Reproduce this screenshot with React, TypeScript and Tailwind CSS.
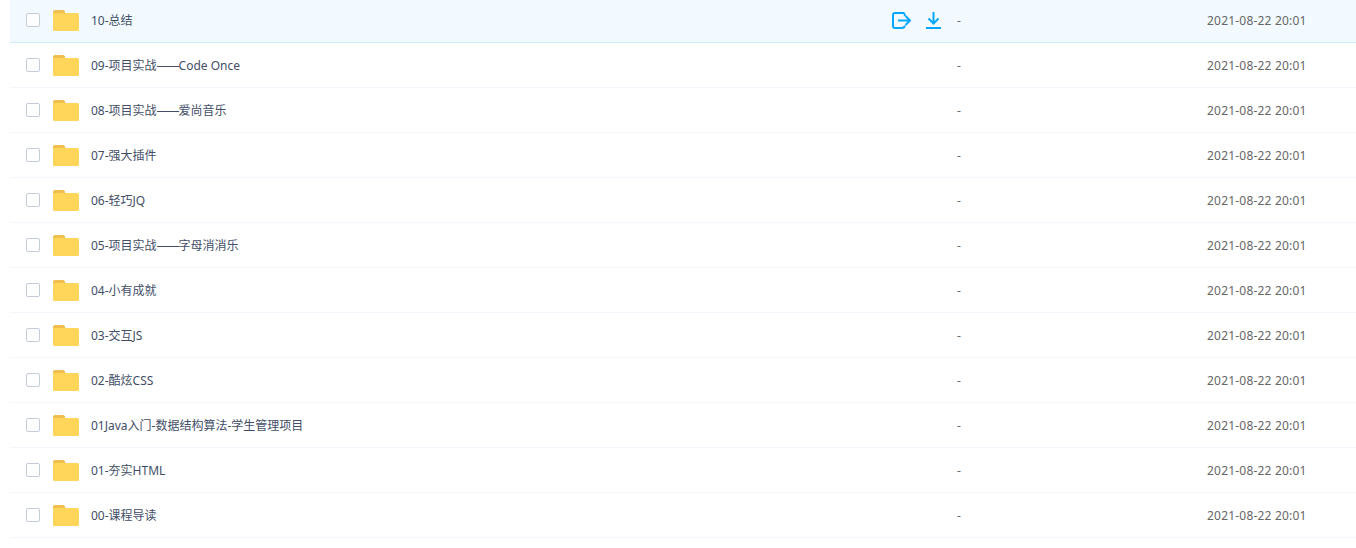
const names: [string, string?, string?][] = [
  ["10-总结"],
  ["09-项目实战", "——", "Code Once"],
  ["08-项目实战", "——", "爱尚音乐"],
  ["07-强大插件"],
  ["06-轻巧JQ"],
  ["05-项目实战", "——", "字母消消乐"],
  ["04-小有成就"],
  ["03-交互JS"],
  ["02-酷炫CSS"],
  ["01Java入门-数据结构算法-学生管理项目"],
  ["01-夯实HTML"],
  ["00-课程导读"],
];

function Folder() {
  return (
    <svg width="26" height="21" viewBox="0 0 26 21" className="shrink-0">
      <path d="M0 2a2 2 0 0 1 2-2h8a2 2 0 0 1 2 1.500V4H0z" fill="#f0bd4f" />
      <rect x="0" y="3" width="26" height="18" rx="1.500" fill="#ffd659" />
    </svg>
  );
}

function ShareIcon() {
  return (
    <svg width="19" height="17" viewBox="0 0 19 17" fill="none" stroke="#06a7ff" strokeWidth="2">
      <path d="M12 1H3a2 2 0 0 0-2 2v11a2 2 0 0 0 2 2h7c1.500 0 2.500-1 3-2.500M13 4c-.300-1.500-.800-3-1.500-3" />
      <path d="M6 8.500h12M13.500 4l4.500 4.500-4.500 4.500" />
    </svg>
  );
}

function DownloadIcon() {
  return (
    <svg width="15" height="17" viewBox="0 0 15 17" fill="none" stroke="#06a7ff" strokeWidth="2">
      <path d="M7.500 0v11M2.500 6.500l5 5 5-5M0 16h15" />
    </svg>
  );
}

export default function App() {
  return (
    <div className="bg-white h-[548px] overflow-hidden pl-[10px] font-['Noto_Sans','Noto_Sans_CJK_SC',sans-serif] text-[12px]">
      <div className="-mt-[2px]">
        {names.map(([a, dash, b], i) => (
          <div
            key={a + (b ?? "")}
            className={`flex items-center h-[45px] border-b ${i === 0 ? "bg-[#f2faff] border-[#cceeff]" : "bg-white border-[#f2f6fd]"}`}
          >
            <span className="w-[14px] h-[14px] ml-[16px] shrink-0 rounded-[2px] border border-[#c4cbd9] bg-white" />
            <span className="ml-[13px] mt-[1px] flex w-[27px]"><Folder /></span>
            <span className="ml-[11px] pt-[2px] w-[801px] shrink-0 text-[#424e67] whitespace-nowrap">
              {a}
              {dash && <span className="tracking-[-1px]">{dash}</span>}
              {b}
            </span>
            <span className="w-[65px] shrink-0 flex items-center gap-[15px]">
              {i === 0 && (
                <>
                  <ShareIcon />
                  <DownloadIcon />
                </>
              )}
            </span>
            <span className="pt-[2px] w-[250px] shrink-0 text-[#666]">-</span>
            <span className="pt-[2px] text-[#666] whitespace-nowrap tracking-[0.2px]">2021-08-22 20:01</span>
          </div>
        ))}
      </div>
    </div>
  );
}
